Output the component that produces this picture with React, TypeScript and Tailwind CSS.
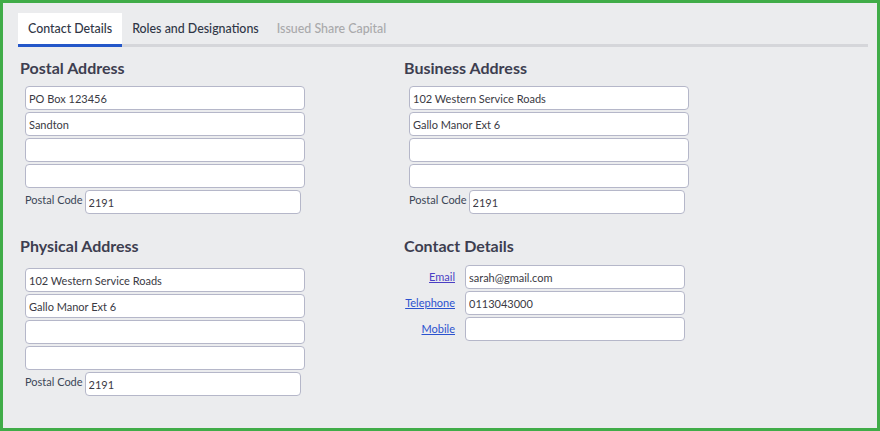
import React from 'react';

const font = { fontFamily: 'Lato, "Open Sans", sans-serif' };

const Field = ({ value = '', width = 'w-[280px]' }: { value?: string; width?: string }) => (
  <input
    readOnly
    value={value}
    className={`${width} h-[24px] rounded-[4px] border border-[#b5b7c9] bg-white pl-[3px] text-[11px] text-[#3a3a44] outline-none`}
    style={font}
  />
);

const AddressBlock = ({
  title,
  lines,
  code,
  gap,
}: {
  title: string;
  lines: string[];
  code: string;
  gap: string;
}) => (
  <div>
    <h2 className={`h-[20px] text-[16px] font-bold leading-[20px] text-[#3d3e50] ${gap}`}>{title}</h2>
    <div className="flex flex-col gap-[2px] pl-[5px]">
      {lines.map((l, i) => (
        <Field key={i} value={l} />
      ))}
      <div className="flex items-start gap-[2px]">
        <span className="mt-[2px] text-[11px] leading-4 text-[#3b4656]">Postal Code</span>
        <Field value={code} width="w-[216px]" />
      </div>
    </div>
  </div>
);

const contacts = [
  { label: 'Email', value: 'sarah@gmail.com', color: 'text-[#4a3fc4] decoration-[#4a3fc4]' },
  { label: 'Telephone', value: '0113043000', color: 'text-[#2b52cf] decoration-[#2b52cf]' },
  { label: 'Mobile', value: '', color: 'text-[#2b52cf] decoration-[#2b52cf]' },
];

export default function App() {
  return (
    <div
      className="box-border h-[431px] w-[880px] border-[3px] border-[#40ac48] bg-[#ebecee] pl-[15px] pr-[9px] pt-[10px]"
      style={font}
    >
      {/* Tabs */}
      <div className="flex h-[34px] border-b-[3px] border-[#d5d6da]">
        <div className="-mb-[3px] flex h-[34px] items-center border-b-[3px] border-[#2457c9] bg-white px-[10px] pt-[2px] text-[12.4px] font-medium text-[#2f3646]">
          Contact Details
        </div>
        <div className="flex h-[31px] items-center pl-[10px] pr-[8px] pt-[2px] text-[12.4px] font-medium text-[#2f3646]">
          Roles and Designations
        </div>
        <div className="flex h-[31px] items-center px-[10px] pt-[2px] text-[12.4px] font-medium text-[#a9a9ab]">
          Issued Share Capital
        </div>
      </div>

      <div className="mt-[11px] grid grid-cols-[384px_1fr] pl-[2px]">
        <div className="flex flex-col gap-[22px]">
          <AddressBlock
            title="Postal Address"
            lines={['PO Box 123456', 'Sandton', '', '']}
            code="2191"
            gap="mb-[8px]"
          />
          <AddressBlock
            title="Physical Address"
            lines={['102 Western Service Roads', 'Gallo Manor Ext 6', '', '']}
            code="2191"
            gap="mb-[12px]"
          />
        </div>
        <div className="flex flex-col gap-[22px]">
          <AddressBlock
            title="Business Address"
            lines={['102 Western Service Roads', 'Gallo Manor Ext 6', '', '']}
            code="2191"
            gap="mb-[8px]"
          />
          <div>
            <h2 className="mb-[9px] h-[20px] text-[16px] font-bold leading-[20px] text-[#3d3e50]">Contact Details</h2>
            <div className="flex flex-col gap-[2px]">
              {contacts.map((c) => (
                <div key={c.label} className="flex items-center gap-[10px]">
                  <a href="#" className={`w-[51px] pt-[1px] text-right text-[11px] underline ${c.color}`}>
                    {c.label}
                  </a>
                  <Field value={c.value} width="w-[220px]" />
                </div>
              ))}
            </div>
          </div>
        </div>
      </div>
    </div>
  );
}
